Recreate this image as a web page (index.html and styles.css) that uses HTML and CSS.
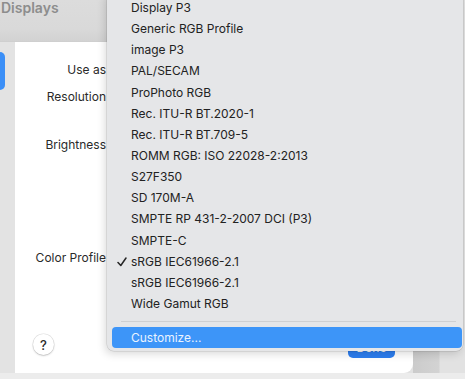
FILE: index.html
```html
<!DOCTYPE html>
<html>
<head>
    <title>Displays</title>
    <link rel="stylesheet" href="styles.css">
</head>
<body>
    <div class="window">
        <div class="title-bar">
            <h1>Displays</h1>
        </div>
        <div class="window-body">
            <div class="sidebar">
                <div class="sidebar-item active"></div>
            </div>
            <div class="panel">
                <div class="settings">
                    <div class="setting-row row-use">Use as</div>
                    <div class="setting-row row-resolution">Resolution</div>
                    <div class="setting-row row-brightness">Brightness</div>
                    <div class="setting-row row-profile">Color Profile</div>
                </div>
                <div class="panel-footer">
                    <button class="help-button">?</button>
                    <button class="done-button">Done</button>
                </div>
            </div>
        </div>
    </div>

    <div class="profile-menu">
        <div class="menu-item">Display P3</div>
        <div class="menu-item">Generic RGB Profile</div>
        <div class="menu-item">image P3</div>
        <div class="menu-item">PAL/SECAM</div>
        <div class="menu-item">ProPhoto RGB</div>
        <div class="menu-item">Rec. ITU-R BT.2020-1</div>
        <div class="menu-item">Rec. ITU-R BT.709-5</div>
        <div class="menu-item">ROMM RGB: ISO 22028-2:2013</div>
        <div class="menu-item">S27F350</div>
        <div class="menu-item">SD 170M-A</div>
        <div class="menu-item">SMPTE RP 431-2-2007 DCI (P3)</div>
        <div class="menu-item">SMPTE-C</div>
        <div class="menu-item checked">
            <svg class="check" width="10" height="10" viewBox="0 0 10 10">
                <polyline points="1,5.5 3.8,8.5 9,1" fill="none" stroke="#262626" stroke-width="1.5" stroke-linecap="round" stroke-linejoin="round"/>
            </svg>
            sRGB IEC61966-2.1
        </div>
        <div class="menu-item">sRGB IEC61966-2.1</div>
        <div class="menu-item">Wide Gamut RGB</div>
        <div class="menu-separator"></div>
        <div class="menu-item highlighted">Customize...</div>
    </div>
</body>
</html>
```

FILE: styles.css
```css
* {
    margin: 0;
    padding: 0;
    box-sizing: border-box;
    font-family: 'Inter', 'Liberation Sans', sans-serif;
}

body {
    width: 465px;
    height: 379px;
    overflow: hidden;
    background-color: #ececec;
    background-image: linear-gradient(90deg, #e4e4e4 413px, #cbcbcb 413px, #d3d3d3 439px, #e2e2e2 440px);
    background-size: 465px 373px;
    background-repeat: no-repeat;
}

.window {
    width: 413px;
    height: 373px;
    display: flex;
    flex-direction: column;
    background: #e2e2e2;
}

.title-bar {
    height: 42px;
    padding-top: 1px;
    background: linear-gradient(180deg, #dcdcdc 0, #d9d9d9 70%, #d2d2d2 100%);
    border-bottom: 1px solid #cfcfcf;
}

.title-bar h1 {
    font-size: 14px;
    font-weight: 600;
    color: #8d8d8d;
    line-height: 14px;
    padding-left: 1px;
}

.window-body {
    flex: 1;
    display: flex;
}

.sidebar {
    width: 15px;
    background: #e3e3e3;
    padding-top: 10px;
}

.sidebar-item.active {
    width: 5px;
    height: 38px;
    background: #3b8ff7;
    border-radius: 0 5px 5px 0;
}

.panel {
    flex: 1;
    background: #ffffff;
    border-bottom-right-radius: 9px;
    display: flex;
    flex-direction: column;
}

.settings {
    flex: 1;
    width: 91px;
    padding-top: 18px;
}

.setting-row {
    height: 20px;
    line-height: 20px;
    text-align: right;
    font-size: 12px;
    color: #2a2a2a;
}

.row-resolution { margin-top: 7px; }
.row-brightness { margin-top: 28px; }
.row-profile { margin-top: 93px; }

.panel-footer {
    display: flex;
    justify-content: space-between;
    align-items: flex-end;
    padding: 0 18px 15px 18px;
}

.help-button {
    width: 21px;
    height: 21px;
    border-radius: 50%;
    border: none;
    background: #ffffff;
    box-shadow: 0 0 0 0.5px rgba(0, 0, 0, 0.12), 0 1px 2px rgba(0, 0, 0, 0.18);
    font-size: 13px;
    font-weight: 500;
    color: #2a2a2a;
    margin-bottom: 3px;
}

.done-button {
    width: 47px;
    height: 21px;
    border: none;
    border-radius: 5px;
    background: #2c7ef0;
    color: #ffffff;
    font-size: 12px;
}

/* Menu del perfil de color */
.profile-menu {
    position: absolute;
    left: 107px;
    top: -9px;
    width: 356px;
    padding: 6px 0 3px;
    background: #e5e6e8;
    border-radius: 7px;
    box-shadow: 0 0 0 0.5px rgba(0, 0, 0, 0.15), -2px 3px 8px rgba(0, 0, 0, 0.15);
}

.menu-item {
    position: relative;
    height: 21.15px;
    line-height: 21.15px;
    padding-left: 24px;
    font-size: 12px;
    color: #222222;
}

.menu-item .check {
    position: absolute;
    left: 10px;
    top: 6px;
}

.menu-separator {
    height: 1px;
    background: #cfd0d2;
    margin: 7px 7px 5px 14px;
}

.menu-item.highlighted {
    margin: 0 1px 0 5px;
    padding-left: 19px;
    background: #3d95f8;
    border-radius: 4px;
    color: #eaf3ff;
}
```
